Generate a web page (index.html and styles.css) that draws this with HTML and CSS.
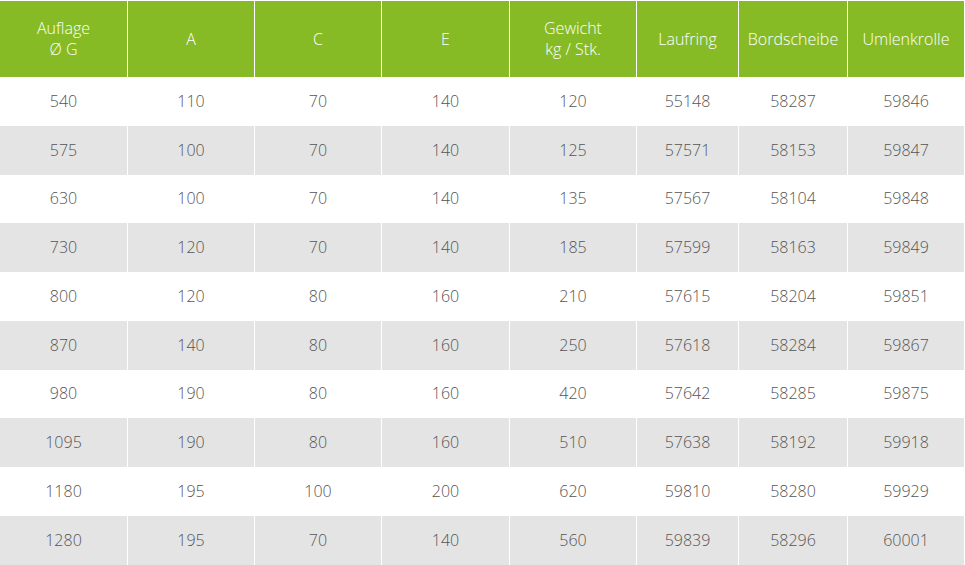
FILE: index.html
```html
<!DOCTYPE html>
<html lang="de">
<head>
<meta charset="utf-8">
<title>Tabelle</title>
<link rel="stylesheet" href="styles.css">
</head>
<body>
<div class="table">
  <div class="row head">
    <div class="cell">Auflage<br>Ø G</div>
    <div class="cell">A</div>
    <div class="cell">C</div>
    <div class="cell">E</div>
    <div class="cell">Gewicht<br>kg / Stk.</div>
    <div class="cell">Laufring</div>
    <div class="cell">Bordscheibe</div>
    <div class="cell">Umlenkrolle</div>
  </div>
  <div class="row"><div class="cell">540</div><div class="cell">110</div><div class="cell">70</div><div class="cell">140</div><div class="cell">120</div><div class="cell">55148</div><div class="cell">58287</div><div class="cell">59846</div></div>
  <div class="row alt"><div class="cell">575</div><div class="cell">100</div><div class="cell">70</div><div class="cell">140</div><div class="cell">125</div><div class="cell">57571</div><div class="cell">58153</div><div class="cell">59847</div></div>
  <div class="row"><div class="cell">630</div><div class="cell">100</div><div class="cell">70</div><div class="cell">140</div><div class="cell">135</div><div class="cell">57567</div><div class="cell">58104</div><div class="cell">59848</div></div>
  <div class="row alt"><div class="cell">730</div><div class="cell">120</div><div class="cell">70</div><div class="cell">140</div><div class="cell">185</div><div class="cell">57599</div><div class="cell">58163</div><div class="cell">59849</div></div>
  <div class="row"><div class="cell">800</div><div class="cell">120</div><div class="cell">80</div><div class="cell">160</div><div class="cell">210</div><div class="cell">57615</div><div class="cell">58204</div><div class="cell">59851</div></div>
  <div class="row alt"><div class="cell">870</div><div class="cell">140</div><div class="cell">80</div><div class="cell">160</div><div class="cell">250</div><div class="cell">57618</div><div class="cell">58284</div><div class="cell">59867</div></div>
  <div class="row"><div class="cell">980</div><div class="cell">190</div><div class="cell">80</div><div class="cell">160</div><div class="cell">420</div><div class="cell">57642</div><div class="cell">58285</div><div class="cell">59875</div></div>
  <div class="row alt"><div class="cell">1095</div><div class="cell">190</div><div class="cell">80</div><div class="cell">160</div><div class="cell">510</div><div class="cell">57638</div><div class="cell">58192</div><div class="cell">59918</div></div>
  <div class="row"><div class="cell">1180</div><div class="cell">195</div><div class="cell">100</div><div class="cell">200</div><div class="cell">620</div><div class="cell">59810</div><div class="cell">58280</div><div class="cell">59929</div></div>
  <div class="row alt"><div class="cell">1280</div><div class="cell">195</div><div class="cell">70</div><div class="cell">140</div><div class="cell">560</div><div class="cell">59839</div><div class="cell">58296</div><div class="cell">60001</div></div>
</div>
</body>
</html>
```
FILE: styles.css
```css
html, body {
  margin: 0;
  background: #ffffff;
}
body {
  padding-top: 1px;
  font-family: "Open Sans", "Liberation Sans", sans-serif;
  font-weight: 300;
  font-size: 16px;
  color: #555555;
}
.table {
  display: grid;
  grid-template-columns: 127px 126px 126px 127px 126px 101px 108px 116px;
  grid-template-rows: 76px;
  grid-auto-rows: 48.75px;
  column-gap: 1px;
  width: 964px;
}
.row {
  display: contents;
}
.cell {
  display: flex;
  align-items: center;
  justify-content: center;
  text-align: center;
  background: #ffffff;
  line-height: 21px;
}
.row.alt .cell {
  background: #e4e4e4;
}
.row.head .cell {
  background: #86bb26;
  color: #ffffff;
}
```
